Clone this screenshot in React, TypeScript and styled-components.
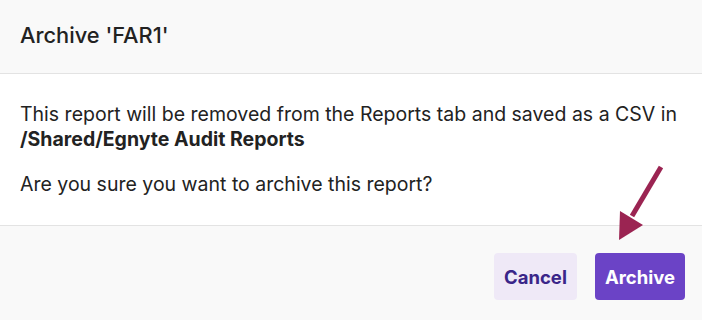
import React from "react";
import styled, { createGlobalStyle } from "styled-components";

const GlobalStyle = createGlobalStyle`
  body {
    margin: 0;
    font-family: Inter, "Noto Sans", sans-serif;
    background: #ffffff;
  }
`;

const Dialog = styled.div`
  position: relative;
  width: 702px;
  height: 320px;
  display: flex;
  flex-direction: column;
  background: #ffffff;
  overflow: hidden;
`;

const Header = styled.div`
  height: 74px;
  box-sizing: border-box;
  display: flex;
  align-items: center;
  padding: 0 20px 4px;
  background: #f9f9f9;
  border-bottom: 1px solid #e3e3e3;
`;

const Title = styled.h2`
  margin: 0;
  font-size: 21.8px;
  font-weight: 500;
  color: #222222;
`;

const Body = styled.div`
  height: 151px;
  box-sizing: border-box;
  padding: 28px 20px 0;
  color: #222222;
  font-size: 19.5px;
  line-height: 25px;
`;

const Paragraph = styled.p`
  margin: 0 0 20px;
`;

const Footer = styled.div`
  flex: 1;
  display: flex;
  justify-content: flex-end;
  align-items: flex-start;
  gap: 18px;
  padding: 27px 17px 0;
  background: #f9f9f9;
  border-top: 1px solid #e3e3e3;
`;

const Button = styled.button<{ $primary?: boolean }>`
  height: 47px;
  padding: 0 10px;
  border: none;
  border-radius: 4px;
  font-family: Inter, "Noto Sans", sans-serif;
  font-size: 18.5px;
  font-weight: 700;
  background: ${(p) => (p.$primary ? "#6b43c6" : "#efe9f7")};
  color: ${(p) => (p.$primary ? "#ffffff" : "#3a2589")};
  cursor: pointer;
`;

const Arrow = styled.svg`
  position: absolute;
  left: 612px;
  top: 160px;
`;

export default function App() {
  return (
    <>
      <GlobalStyle />
      <Dialog>
        <Header>
          <Title>Archive 'FAR1'</Title>
        </Header>
        <Body>
          <Paragraph>
            This report will be removed from the Reports tab and saved as a CSV in{" "}
            <strong>/Shared/Egnyte Audit Reports</strong>
          </Paragraph>
          <Paragraph>Are you sure you want to archive this report?</Paragraph>
        </Body>
        <Footer>
          <Button>Cancel</Button>
          <Button $primary>Archive</Button>
        </Footer>
        <Arrow width="60" height="90" viewBox="612 160 60 90">
          <line x1="661" y1="167" x2="632" y2="216" stroke="#9b2452" strokeWidth="5" />
          <polygon points="619,240 620,211 643,225" fill="#9b2452" />
        </Arrow>
      </Dialog>
    </>
  );
}
